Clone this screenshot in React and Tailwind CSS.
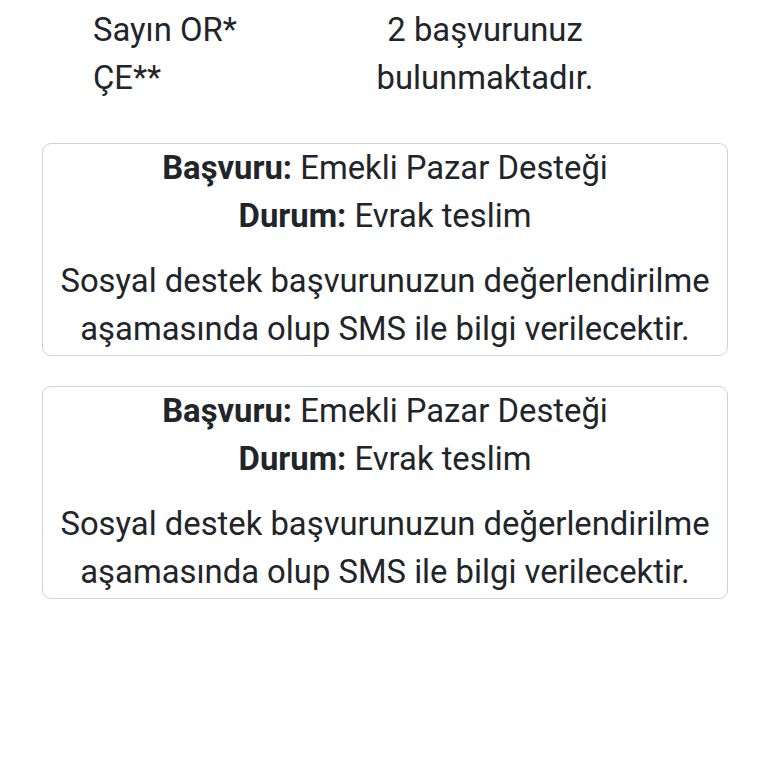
import React from 'react';

const applications = [
  { id: 1, name: 'Emekli Pazar Desteği', status: 'Evrak teslim' },
  { id: 2, name: 'Emekli Pazar Desteği', status: 'Evrak teslim' },
];

const ApplicationCard = ({ name, status }) => (
  <div className="ml-[42px] mr-[40px] rounded-[9px] border border-[#d2d2d2] bg-white pb-[2px] text-center">
    <div>
      <span className="font-bold">Başvuru:</span> {name}
    </div>
    <div>
      <span className="font-bold">Durum:</span> {status}
    </div>
    <p className="mt-[17px]">
      Sosyal destek başvurunuzun değerlendirilme aşamasında olup SMS ile bilgi verilecektir.
    </p>
  </div>
);

export default function App() {
  return (
    <div
      className="min-h-[768px] w-[768px] bg-white text-[32.8px] leading-[48px] text-[#212529]"
      style={{ fontFamily: 'Roboto, "Noto Sans", sans-serif' }}
    >
      <div className="flex pt-[6px]">
        <div className="ml-[93px] w-[200px]">Sayın OR* ÇE**</div>
        <div className="w-[384px] text-center">2 başvurunuz bulunmaktadır.</div>
      </div>

      <div className="mt-[41px] flex flex-col gap-[30px]">
        {applications.map((app) => (
          <ApplicationCard key={app.id} name={app.name} status={app.status} />
        ))}
      </div>
    </div>
  );
}
